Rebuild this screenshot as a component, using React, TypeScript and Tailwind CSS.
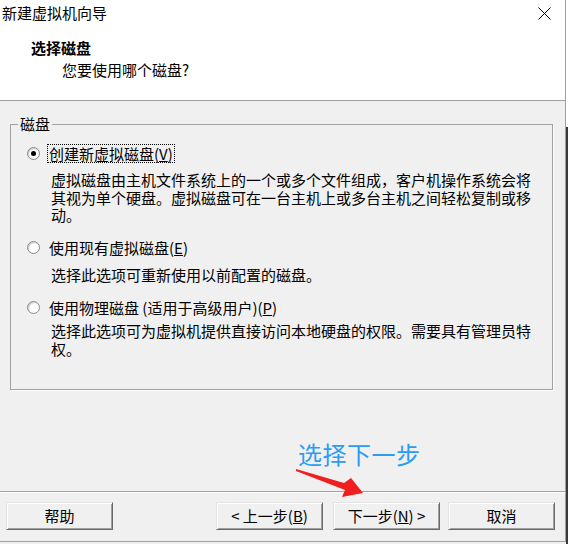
import React from "react";

const font = { fontFamily: '"Noto Sans CJK SC", "Noto Sans", sans-serif' };

function Radio({ checked }: { checked?: boolean }) {
  return (
    <span className="w-[13px] h-[13px] rounded-full border border-[#8a8a8a] bg-white flex items-center justify-center shrink-0 shadow-[inset_1px_1px_1px_#c8c8c8]">
      {checked && <span className="w-[5px] h-[5px] rounded-full bg-black" />}
    </span>
  );
}

function Option({
  label,
  checked,
  focused,
  children,
  className,
}: {
  label: React.ReactNode;
  checked?: boolean;
  focused?: boolean;
  children: React.ReactNode;
  className?: string;
}) {
  return (
    <div className={className}>
      <div className="flex items-center h-[18px] pl-[16px] gap-[7px]">
        <Radio checked={checked} />
        <span
          className={`leading-[17px] px-[1px] border ${
            focused ? "border-dotted border-black" : "border-transparent"
          }`}
        >
          {label}
        </span>
      </div>
      {children}
    </div>
  );
}

function WinButton({ children, className }: { children: React.ReactNode; className?: string }) {
  return (
    <button
      className={`w-[107px] h-[28px] bg-[#f0f0f0] border border-t-[#e3e3e3] border-l-[#e3e3e3] border-b-[#696969] border-r-[#696969] shadow-[inset_1px_1px_0_#ffffff,inset_-1px_-1px_0_#a0a0a0] text-[15px] text-black flex items-center justify-center ${className ?? ""}`}
    >
      {children}
    </button>
  );
}

export default function App() {
  return (
    <div className="w-[568px] h-[544px] bg-[#f0f0f0] flex overflow-hidden relative text-black" style={font}>
      <div className="w-[566px] h-[542px] flex flex-col border-r border-b border-[#a0a0a0]">
        {/* title + header */}
        <div className="h-[101px] bg-white border-b border-[#a0a0a0] flex flex-col">
          <div className="h-[26px] flex items-center justify-between pl-[2px] pr-[14px]">
            <span className="text-[15px] leading-[18px]">新建虚拟机向导</span>
            <svg width="13" height="13" viewBox="0 0 13 13">
              <path d="M0.5 0.5 L12.5 12.5 M12.5 0.5 L0.5 12.5" stroke="#000" strokeWidth="1" />
            </svg>
          </div>
          <div className="pl-[31px] pt-[13px] text-[15px] leading-[18px] font-bold">选择磁盘</div>
          <div className="pl-[62px] pt-[4px] text-[15px] leading-[18px]">您要使用哪个磁盘?</div>
        </div>

        {/* body */}
        <div className="flex-1 flex flex-col">
          <div className="pt-[23px] pl-[10px] pr-[12px]">
            <div className="relative h-[266px] border border-[#a0a0a0] shadow-[1px_1px_0_#ffffff] text-[15px] leading-[17.5px]">
              <span className="absolute -top-[10px] left-[7px] px-[2px] bg-[#f0f0f0] leading-[18px]">磁盘</span>
              <Option
                className="pt-[19px]"
                checked
                focused
                label={
                  <>
                    创建新虚拟磁盘(<span className="underline">V</span>)
                  </>
                }
              >
                <div className="pl-[40px] pt-[9px] pr-[12px]">
                  虚拟磁盘由主机文件系统上的一个或多个文件组成，客户机操作系统会将其视为单个硬盘。虚拟磁盘可在一台主机上或多台主机之间轻松复制或移动。
                </div>
              </Option>
              <Option
                className="pt-[15px]"
                label={
                  <>
                    使用现有虚拟磁盘(<span className="underline">E</span>)
                  </>
                }
              >
                <div className="pl-[40px] pt-[9px]">选择此选项可重新使用以前配置的磁盘。</div>
              </Option>
              <Option
                className="pt-[15px]"
                label={
                  <>
                    使用物理磁盘 (适用于高级用户)(<span className="underline">P</span>)
                  </>
                }
              >
                <div className="pl-[40px] pt-[6px] pr-[12px]">
                  选择此选项可为虚拟机提供直接访问本地硬盘的权限。需要具有管理员特权。
                </div>
              </Option>
            </div>
          </div>

          <div className="flex-1" />

          <div className="border-t border-[#a0a0a0] border-b border-b-white" />
          <div className="h-[48px] flex items-start pt-[9px] pl-[6px] text-[15px]">
            <WinButton>帮助</WinButton>
            <WinButton className="ml-[103px]">
              &lt; 上一步(<span className="underline">B</span>)
            </WinButton>
            <WinButton className="ml-[10px]">
              下一步(<span className="underline">N</span>) &gt;
            </WinButton>
            <WinButton className="ml-[8px]">取消</WinButton>
          </div>
        </div>
      </div>

      {/* dark strip of the desktop behind the dialog */}
      <div className="flex-1 flex flex-col">
        <div className="h-[127px] bg-white" />
        <div className="flex-1 bg-[#3a3a3a]" />
      </div>

      {/* annotation overlay */}
      <span className="absolute left-[298px] top-[439px] text-[24px] leading-[30px] text-[#2b9cf2] tracking-[0.5px]">
        选择下一步
      </span>
      <svg className="absolute left-0 top-0" width="568" height="544" viewBox="0 0 568 544">
        <polygon
          points="296,469 344,483 351,478 363,493 342,497 345,490 296,471"
          fill="#f01e1e"
        />
      </svg>
    </div>
  );
}
